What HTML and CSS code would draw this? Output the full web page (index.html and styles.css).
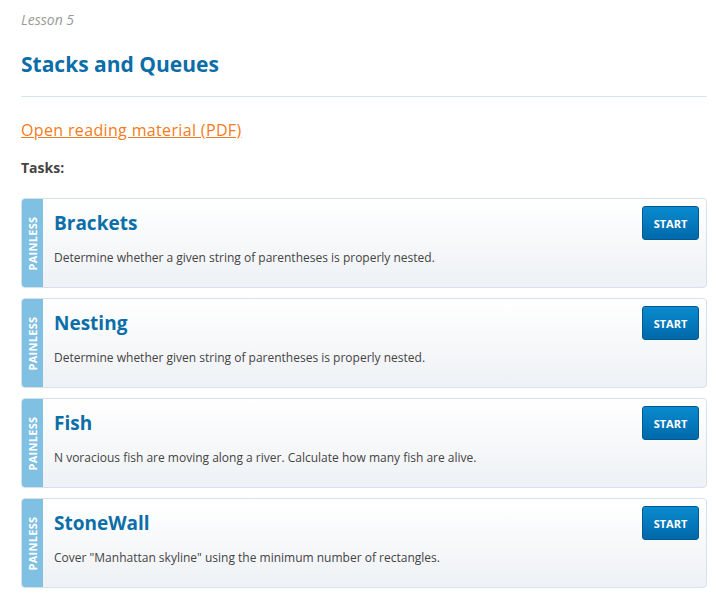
FILE: index.html
```html
<!DOCTYPE html>
<html>
<head>
<meta charset="utf-8">
<link rel="stylesheet" href="styles.css">
</head>
<body>
<div class="page">
  <div class="lesson">Lesson 5</div>
  <h1 class="title">Stacks and Queues</h1>
  <div class="rule"></div>
  <a class="pdf" href="#">Open reading material (PDF)</a>
  <div class="tasks-label">Tasks:</div>
  <div class="tasks">
    <div class="task">
      <div class="level"><span>PAINLESS</span></div>
      <div class="body">
        <div class="name">Brackets</div>
        <div class="desc">Determine whether a given string of parentheses is properly nested.</div>
      </div>
      <a class="start" href="#">START</a>
    </div>
    <div class="task">
      <div class="level"><span>PAINLESS</span></div>
      <div class="body">
        <div class="name">Nesting</div>
        <div class="desc">Determine whether given string of parentheses is properly nested.</div>
      </div>
      <a class="start" href="#">START</a>
    </div>
    <div class="task">
      <div class="level"><span>PAINLESS</span></div>
      <div class="body">
        <div class="name">Fish</div>
        <div class="desc">N voracious fish are moving along a river. Calculate how many fish are alive.</div>
      </div>
      <a class="start" href="#">START</a>
    </div>
    <div class="task">
      <div class="level"><span>PAINLESS</span></div>
      <div class="body">
        <div class="name">StoneWall</div>
        <div class="desc">Cover "Manhattan skyline" using the minimum number of rectangles.</div>
      </div>
      <a class="start" href="#">START</a>
    </div>
  </div>
</div>
</body>
</html>
```

FILE: styles.css
```css
html, body {
  margin: 0;
  padding: 0;
  background: #ffffff;
}
body {
  font-family: "Open Sans", "DejaVu Sans", sans-serif;
  color: #444;
}
.page {
  width: 686px;
  padding: 10px 0 0 21px;
}
.lesson {
  font-size: 14px;
  font-style: italic;
  color: #9a9a9a;
  line-height: 20px;
}
.title {
  margin: 21px 0 0;
  font-size: 21px;
  font-weight: 700;
  color: #0b6ea8;
  line-height: 26px;
}
.rule {
  margin-top: 19px;
  height: 1px;
  background: #d6e4ed;
}
.pdf {
  display: inline-block;
  margin-top: 22px;
  font-size: 16px;
  letter-spacing: 0.35px;
  line-height: 22px;
  color: #f57b20;
  text-decoration: underline;
}
.tasks-label {
  margin-top: 17px;
  font-size: 14px;
  font-weight: 700;
  color: #444;
  line-height: 20px;
}
.tasks {
  margin-top: 20px;
  display: flex;
  flex-direction: column;
  gap: 10px;
}
.task {
  display: flex;
  align-items: stretch;
  height: 88px;
  border: 1px solid #d5e2ea;
  border-radius: 4px;
  background: linear-gradient(#ffffff, #eef1f5);
  overflow: hidden;
}
.level {
  width: 21px;
  flex: none;
  background: #80c0e3;
  display: flex;
  align-items: center;
  justify-content: center;
}
.level span {
  transform: rotate(-90deg);
  white-space: nowrap;
  color: #ffffff;
  font-size: 11px;
  font-weight: 700;
  letter-spacing: 0.3px;
}
.body {
  flex: 1;
  padding: 11px 0 0 11px;
}
.name {
  font-size: 19px;
  font-weight: 700;
  color: #0b6ea8;
  line-height: 26px;
}
.desc {
  margin-top: 13px;
  font-size: 12px;
  color: #444;
  line-height: 18px;
}
.start {
  align-self: flex-start;
  margin: 7px 7px 0 0;
  width: 55px;
  height: 32px;
  border: 1px solid #005a8e;
  border-radius: 3px;
  background: linear-gradient(#0a8ad0, #0069aa);
  color: #ffffff;
  font-size: 11px;
  font-weight: 700;
  text-decoration: none;
  display: flex;
  align-items: center;
  justify-content: center;
}
```
